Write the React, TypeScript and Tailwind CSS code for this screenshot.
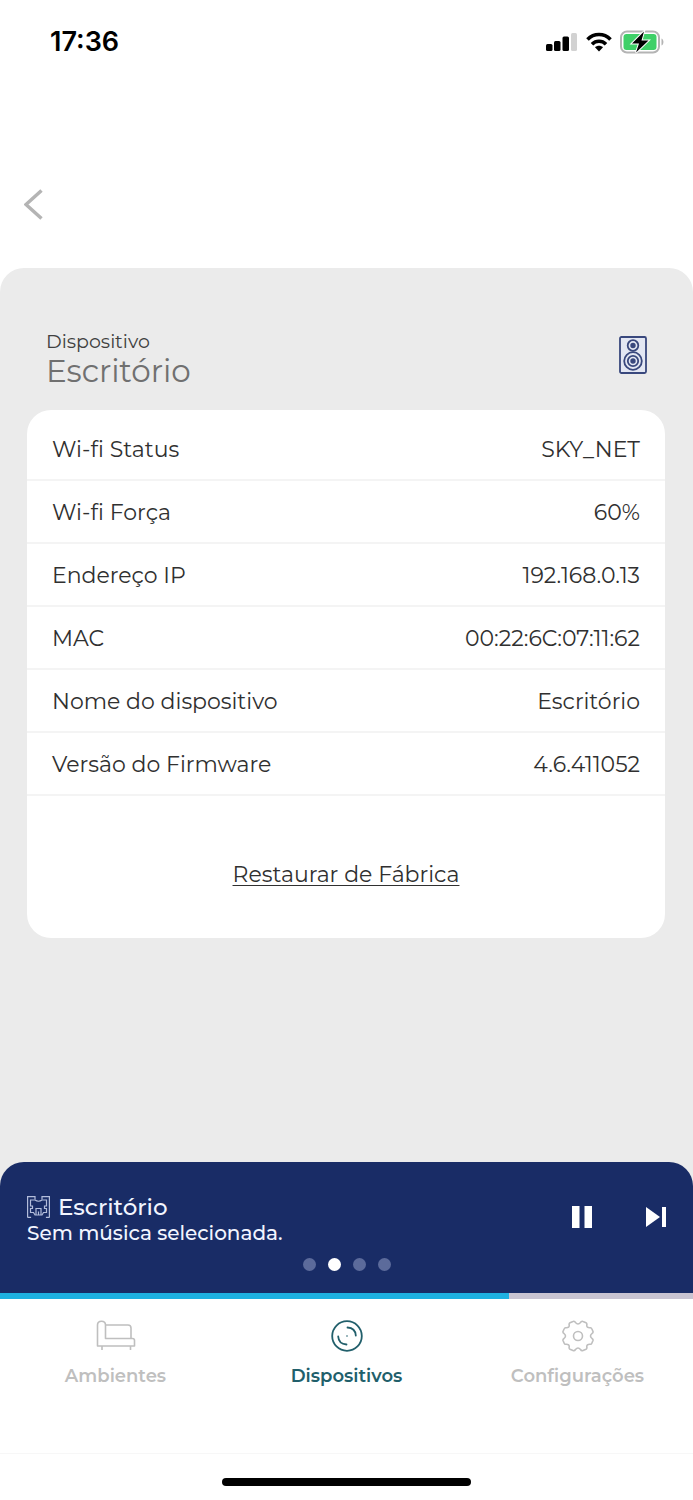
import { useState } from "react";
import clsx from "clsx";

const details = [
  { label: "Wi-fi Status", value: "SKY_NET" },
  { label: "Wi-fi Força", value: "60%" },
  { label: "Endereço IP", value: "192.168.0.13" },
  { label: "MAC", value: "00:22:6C:07:11:62" },
  { label: "Nome do dispositivo", value: "Escritório" },
  { label: "Versão do Firmware", value: "4.6.411052" },
];

function SignalIcon() {
  return (
    <svg width="32" height="18" viewBox="0 0 32 18" aria-hidden="true">
      <rect x="0" y="11" width="6.500" height="7" rx="1.500" />
      <rect x="8" y="8" width="6.500" height="10" rx="1.500" />
      <rect x="16.500" y="3.500" width="6.500" height="14.500" rx="1.500" />
      <rect x="25" y="0" width="6" height="18" rx="1.500" fill="#d2d2d2" />
    </svg>
  );
}

function WifiIcon() {
  return (
    <svg width="26" height="20" viewBox="0 0 26 20" fill="none" stroke="#000" strokeWidth="3.600" aria-hidden="true">
      <path d="M1.500 7.500C8 .9 18 .9 24.500 7.500" />
      <path d="M6 12.200c4-3.900 10-3.900 14 0" />
      <path d="M13 19.500l-4-4.200c2.300-2 5.700-2 8 0z" fill="#000" stroke="none" />
    </svg>
  );
}

function BatteryIcon() {
  return (
    <svg width="45" height="24" viewBox="0 0 45 24" aria-hidden="true">
      <rect x="1" y="1.500" width="38" height="21" rx="6" fill="#fff" stroke="#b4b4b4" strokeWidth="2" />
      <rect x="3.500" y="4" width="33" height="16" rx="3" fill="#3fd068" />
      <path d="M41.500 8.500c2.600 1 2.600 6 0 7z" fill="#b4b4b4" />
      <path d="M24 1.500 12 13.500h7l-3 9L28.500 10.500h-7z" stroke="#fff" strokeWidth="2" paintOrder="stroke" />
    </svg>
  );
}

function SpeakerIcon() {
  return (
    <svg width="28" height="38" viewBox="0 0 28 38" fill="none" stroke="#39487d" strokeWidth="1.800" aria-hidden="true">
      <rect x="1" y="1" width="26" height="36" rx="1.500" fill="#e3e7f3" />
      <circle cx="14" cy="9.500" r="5.300" />
      <circle cx="14" cy="9.500" r="1.800" fill="#39487d" />
      <circle cx="14" cy="25" r="8.800" />
      <circle cx="14" cy="25" r="5.200" />
      <circle cx="14" cy="25" r="1.800" fill="#39487d" />
    </svg>
  );
}

function RoomIcon() {
  return (
    <svg width="23" height="22" viewBox="0 0 23 22" fill="none" stroke="#b3bddb" strokeWidth="1.200" aria-hidden="true">
      <path d="M.6 21.500V.6H8v3M22.400 21.500V.6H15v3M.6 21.400h3.500M22.400 21.400h-3.500" />
      <path d="M3.500 4H8q3.500 2.500 7 0h4.500v6h-2v2.500h2v4h-3l-1.500 2.500h-7L6.500 16.500h-3v-4h2V10h-2z" />
      <path d="M9 19v-6.500h5V19M11.500 19v-3.500" />
    </svg>
  );
}

function SofaIcon() {
  return (
    <svg width="40" height="32" viewBox="0 0 40 32" fill="none" stroke="currentColor" strokeWidth="1.600" strokeLinejoin="round" aria-hidden="true">
      <path d="M1.500 26V5c0-5 8-5 8 0v13.500h27q2 0 2 2V26z" />
      <path d="M9.500 5H32q3 0 3 3v10.500M6 26v4M34.500 26v4" />
    </svg>
  );
}

function DiscIcon() {
  return (
    <svg width="32" height="32" viewBox="0 0 32 32" fill="none" stroke="currentColor" strokeWidth="1.800" strokeLinecap="round" aria-hidden="true">
      <circle cx="16" cy="16" r="14.800" />
      <path d="M16.500 7.500c5 .3 8 3.500 8.300 8M15.500 24.500c-5-.3-8-3.500-8.300-8" />
      <circle cx="16" cy="16" r=".8" fill="currentColor" stroke="none" />
    </svg>
  );
}

function GearIcon() {
  return (
    <svg width="32" height="32" viewBox="0 0 32 32" fill="none" stroke="currentColor" strokeWidth="1.600" strokeLinejoin="round" aria-hidden="true">
      <path d="M11 1.500Q12.500.8 13.500 2.500 16 5.500 18.500 2.500 19.500.8 21 1.500L24 2.800Q25.200 3.500 24.800 5 24.500 8 28 7.800 29.300 7.500 29.800 8.800L31 11.500Q31.300 12.800 30 13.500 27 16 30 18.500 31.300 19.200 31 20.500L29.800 23.200Q29.300 24.500 28 24.200 24.500 24 24.800 27 25.200 28.500 24 29.200L21 30.500Q19.500 31.200 18.500 29.500 16 26.500 13.500 29.500 12.500 31.200 11 30.500L8 29.200Q6.800 28.500 7.200 27 7.500 24 4 24.200 2.700 24.500 2.200 23.200L1 20.500Q.7 19.200 2 18.500 5 16 2 13.500.7 12.800 1 11.500L2.200 8.800Q2.700 7.500 4 7.800 7.500 8 7.200 5 6.800 3.500 8 2.800z" />
      <circle cx="16" cy="16" r="4.500" />
    </svg>
  );
}

const tabs = [
  { label: "Ambientes", icon: SofaIcon },
  { label: "Dispositivos", icon: DiscIcon },
  { label: "Configurações", icon: GearIcon },
];

function StatusBar() {
  return (
    <div className="flex items-center justify-between pt-6 pr-7 pl-[50px]">
      <span className="font-['Inter',sans-serif] text-[27px] leading-9 font-semibold text-black">17:36</span>
      <div className="flex items-center gap-2">
        <SignalIcon />
        <WifiIcon />
        <BatteryIcon />
      </div>
    </div>
  );
}

function DeviceCard() {
  return (
    <section className="mr-7 ml-[27px] rounded-3xl bg-white pt-2">
      <dl>
        {details.map((item) => (
          <div
            key={item.label}
            className="flex h-[63px] items-center justify-between border-b-2 border-[#f4f4f4] px-[25px] pt-[2px] text-[22px] leading-8 text-[#303030]"
          >
            <dt>{item.label}</dt>
            <dd>{item.value}</dd>
          </div>
        ))}
      </dl>
      <div className="flex justify-center pt-[63px] pb-[47px]">
        <button className="text-[22px] leading-8 text-[#303030] underline decoration-1 underline-offset-3">
          Restaurar de Fábrica
        </button>
      </div>
    </section>
  );
}

function Player() {
  const [page, setPage] = useState(1);

  return (
    <section className="bg-[#ebebeb]">
      <div className="rounded-t-3xl bg-[#192c66] px-[27px] pt-[31px] pb-[22px] text-white">
        <div className="flex items-start justify-between">
          <div className="text-[#f2f5ff]">
            <div className="flex items-center gap-2">
              <RoomIcon />
              <span className="text-[23px] leading-7 font-medium">Escritório</span>
            </div>
            <p className="text-[20px] leading-6 font-medium">Sem música selecionada.</p>
          </div>
          <div className="flex items-center gap-[53px] pt-3">
            <button aria-label="Pausar">
              <svg width="21" height="24" viewBox="0 0 21 24" fill="currentColor">
                <rect x="0" y="1" width="7.500" height="22" />
                <rect x="12.500" y="1" width="7.500" height="22" />
              </svg>
            </button>
            <button aria-label="Próxima">
              <svg width="20" height="20" viewBox="0 0 20 20" fill="currentColor">
                <path d="M0 0 14 10 0 20z" />
                <rect x="16" y="0" width="4" height="20" />
              </svg>
            </button>
          </div>
        </div>
        <div className="mt-[13px] flex justify-center gap-3">
          {[0, 1, 2, 3].map((i) => (
            <button
              key={i}
              aria-label={`Página ${i + 1}`}
              onClick={() => setPage(i)}
              className={clsx("size-[13px] rounded-full", i === page ? "bg-white" : "bg-[#5c6b9b]")}
            />
          ))}
        </div>
      </div>
      <div className="h-[6px] bg-[#c8c4d2]">
        <div className="h-full bg-[#1eb1e1]" style={{ width: "73.4%" }} />
      </div>
    </section>
  );
}

function TabBar() {
  const [active, setActive] = useState("Dispositivos");

  return (
    <nav className="grid grid-cols-3 pt-[21px] pb-[63px]">
      {tabs.map((tab) => (
        <button
          key={tab.label}
          onClick={() => setActive(tab.label)}
          className={clsx(
            "flex flex-col items-center gap-[10px] text-[18px] leading-7 font-semibold",
            active === tab.label ? "text-[#215f6b]" : "text-[#bfbfbf]"
          )}
        >
          <tab.icon />
          {tab.label}
        </button>
      ))}
    </nav>
  );
}

export default function App() {
  return (
    <div className="flex min-h-screen flex-col bg-white font-['Montserrat','Inter',sans-serif]">
      <StatusBar />
      <header className="px-6 pt-[129px] pb-12">
        <button aria-label="Voltar" className="block text-[#b4b4b4]">
          <svg width="20" height="31" viewBox="0 0 20 31" fill="none" stroke="currentColor" strokeWidth="3.500">
            <path d="M17.500 1.500 2 15.500l15.500 14" />
          </svg>
        </button>
      </header>

      <main className="flex-1 rounded-t-3xl bg-[#ebebeb]">
        <div className="flex items-start justify-between px-[46px] pt-[62px] pb-[22px]">
          <div>
            <p className="text-[19px] leading-6 text-[#404040]">Dispositivo</p>
            <h1 className="text-[31px] leading-[34px] text-[#707070]">Escritório</h1>
          </div>
          <div className="pt-[6px]">
            <SpeakerIcon />
          </div>
        </div>
        <DeviceCard />
      </main>

      <Player />
      <TabBar />

      <div className="flex justify-center border-t border-[#f7f7f7] pt-6 pb-[14px]">
        <div className="h-[8px] w-[36%] rounded-full bg-black" />
      </div>
    </div>
  );
}
